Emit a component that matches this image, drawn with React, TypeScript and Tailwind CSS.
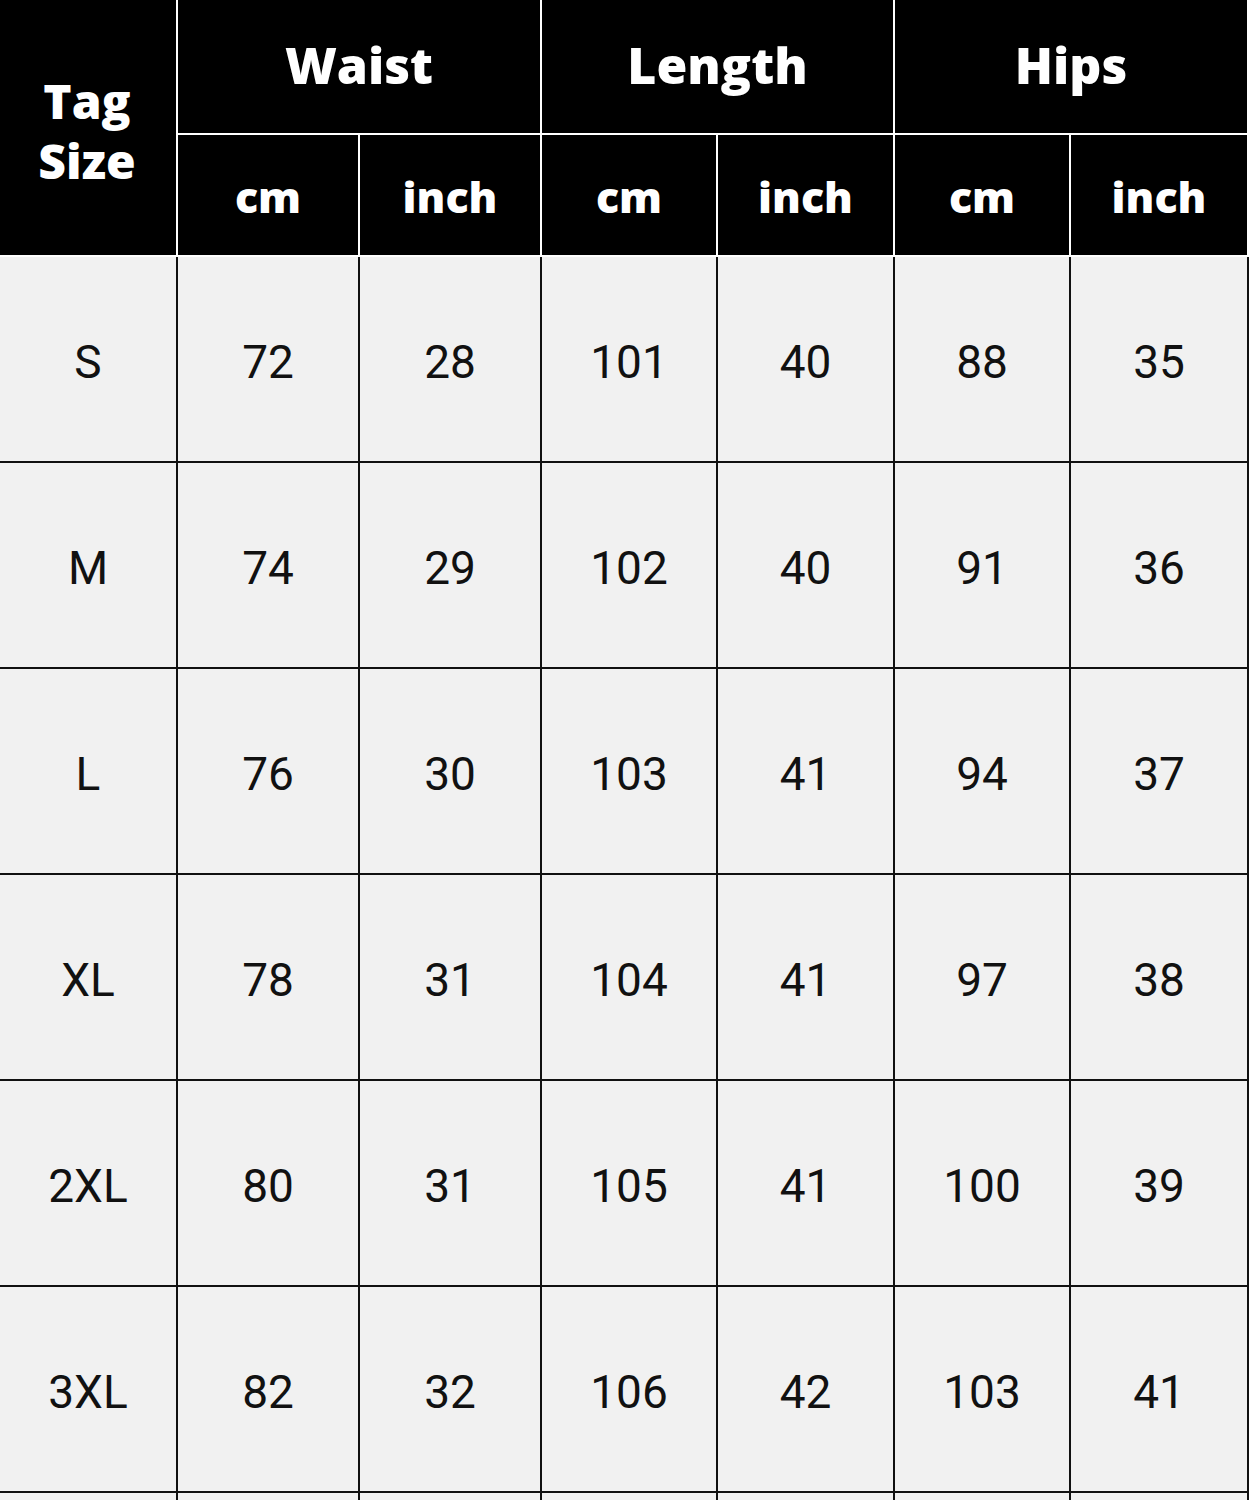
import React from "react";

const rows: string[][] = [
  ["S", "72", "28", "101", "40", "88", "35"],
  ["M", "74", "29", "102", "40", "91", "36"],
  ["L", "76", "30", "103", "41", "94", "37"],
  ["XL", "78", "31", "104", "41", "97", "38"],
  ["2XL", "80", "31", "105", "41", "100", "39"],
  ["3XL", "82", "32", "106", "42", "103", "41"],
  ["", "", "", "", "", "", ""],
];

const cols = "grid-cols-[176px_180px_180px_174px_175px_174px_176px]";

export default function App() {
  const head = { fontFamily: '"Open Sans", "DejaVu Sans", sans-serif' };
  const data = { fontFamily: 'Roboto, "Liberation Sans", sans-serif' };
  return (
    <div className="w-[1249px] h-[1500px] overflow-hidden bg-[#f1f1f1]">
      <div
        className={`grid ${cols} grid-rows-[133px_120px] gap-[2px] bg-white pr-[2px] pb-[2px] w-[1249px]`}
        style={head}
      >
        <div className="row-span-2 bg-black text-white font-extrabold text-[48px] leading-[60px] flex flex-col items-center justify-center pt-[6px] pr-[2px]">
          <span>Tag</span>
          <span>Size</span>
        </div>
        <div className="col-span-2 bg-black text-white font-extrabold text-[50px] flex items-center justify-center pb-[2px]">
          Waist
        </div>
        <div className="col-span-2 bg-black text-white font-extrabold text-[50px] flex items-center justify-center pb-[2px]">
          Length
        </div>
        <div className="col-span-2 bg-black text-white font-extrabold text-[50px] flex items-center justify-center pb-[2px]">
          Hips
        </div>
        {["cm", "inch", "cm", "inch", "cm", "inch"].map((t, i) => (
          <div
            key={i}
            className="bg-black text-white font-extrabold text-[43px] flex items-center justify-center pt-[4px]"
          >
            {t}
          </div>
        ))}
      </div>
      <div
        className={`grid ${cols} auto-rows-[204px] gap-[2px] bg-[#111] pr-[2px] w-[1249px]`}
        style={data}
      >
        {rows.map((r, ri) =>
          r.map((c, ci) => (
            <div
              key={`${ri}-${ci}`}
              className="bg-[#f1f1f1] text-[#111] font-normal text-[46px] flex items-center justify-center pt-[6px]"
            >
              {c}
            </div>
          ))
        )}
      </div>
    </div>
  );
}
